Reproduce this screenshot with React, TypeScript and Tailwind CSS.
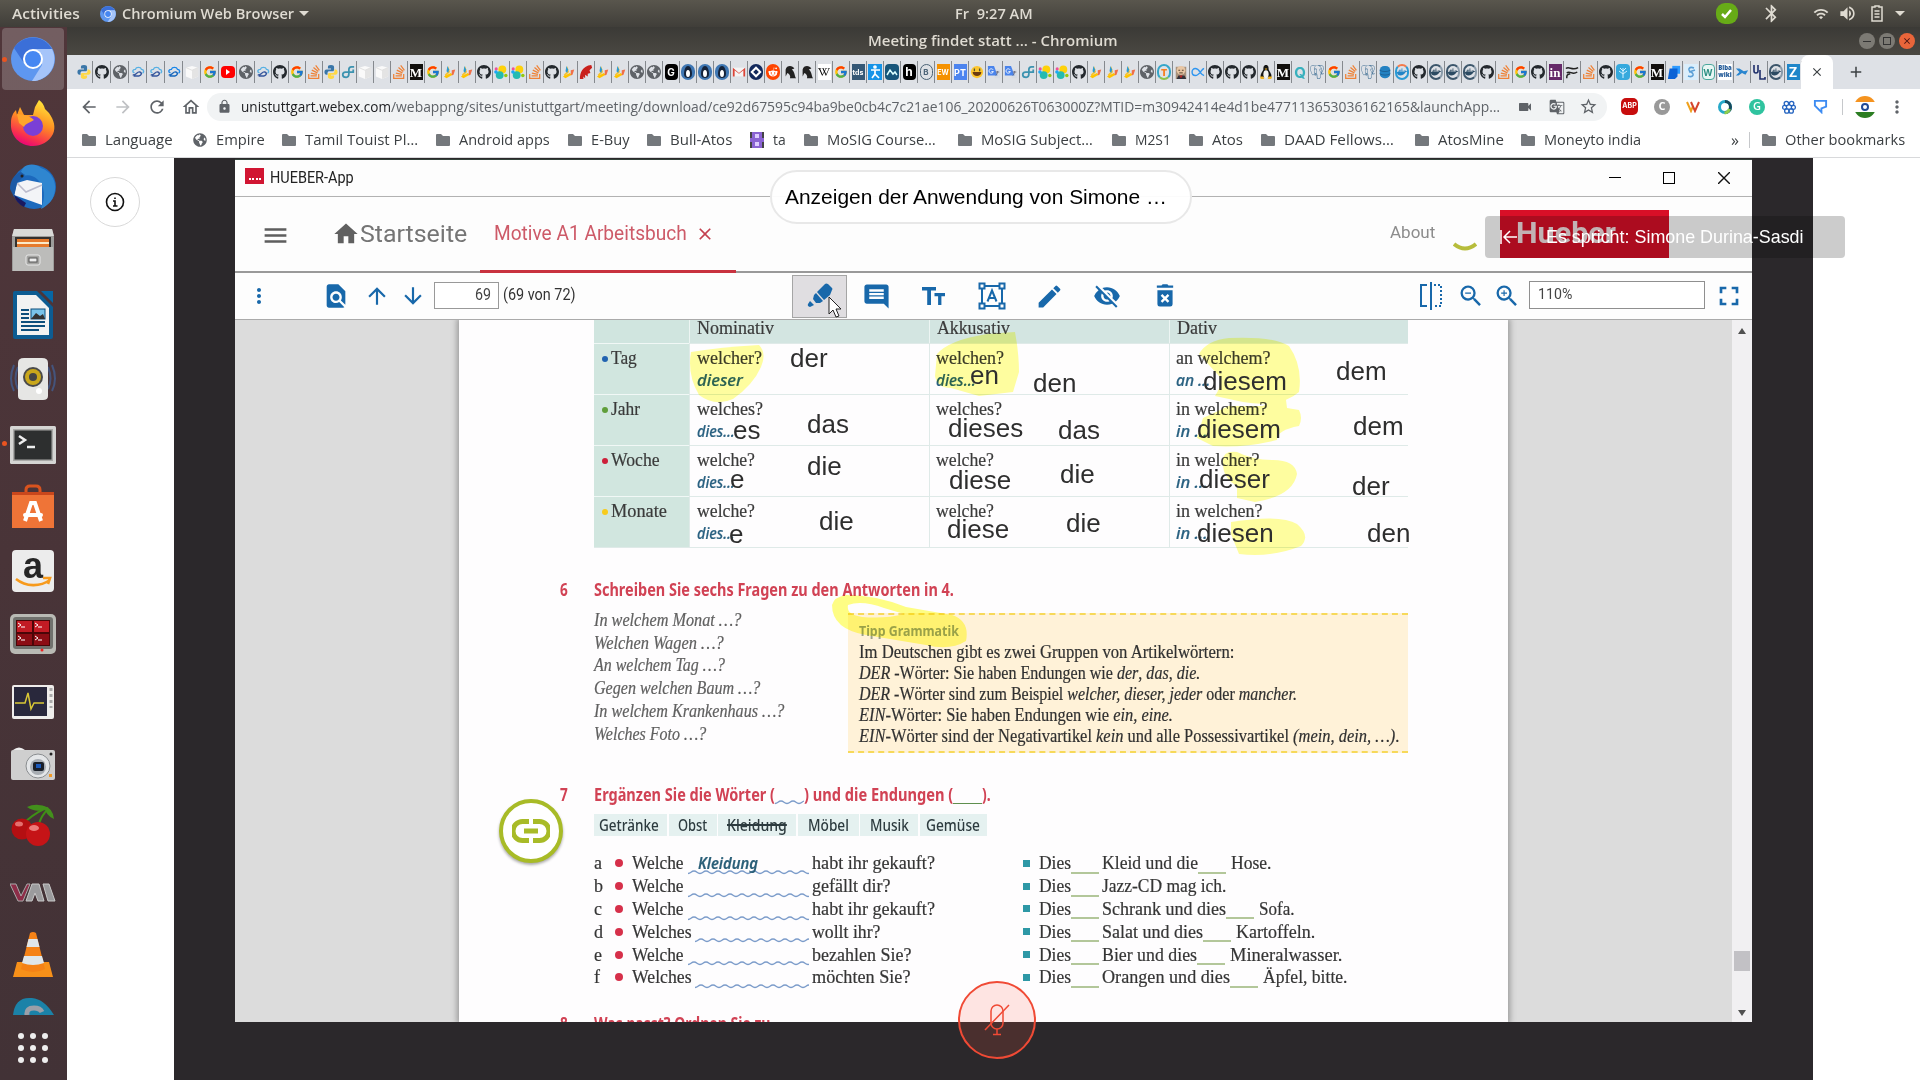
import React, { useLayoutEffect, useRef, useState } from "react";
import { FaGithub, FaGlobeAmericas, FaStackOverflow, FaWikipediaW, FaDocker, FaCloud, FaRedditAlien } from "react-icons/fa";
import { FcGoogle } from "react-icons/fc";
import { SiPostgresql } from "react-icons/si";
import {
  MdArrowBack, MdArrowForward, MdRefresh, MdOutlineHome, MdLock, MdVideocam, MdStarOutline, MdMoreVert,
  MdFindInPage, MdArrowUpward, MdArrowDownward, MdInsertComment, MdEdit, MdVisibilityOff,
  MdZoomIn, MdZoomOut, MdFullscreen, MdHome, MdGTranslate, MdMenu, MdClose, MdAdd, MdVolumeUp, MdWifi, MdBluetooth,
} from "react-icons/md";

/** Text stretched horizontally so that it is exactly `w` pixels wide; `box` is the room it occupies. */
function Fit({ w, box, className = "", children }: { w: number; box?: number; className?: string; children: React.ReactNode }) {
  const ref = useRef<HTMLSpanElement>(null);
  const [s, setS] = useState(1);
  useLayoutEffect(() => {
    if (ref.current) setS(w / ref.current.offsetWidth);
  }, [w]);
  return (
    <span className={"block shrink-0 whitespace-nowrap " + className} style={{ width: box ?? w }}>
      <span ref={ref} className="inline-block origin-left whitespace-pre" style={{ transform: `scaleX(${s})` }}>
        {children}
      </span>
    </span>
  );
}

/* ---------- Favicons ---------- */

const Letter = ({ c, className }: { c: string; className: string }) => (
  <span className={"flex h-4 w-[13px] items-center justify-center font-bold leading-none " + className}>{c}</span>
);

function Favicon({ k }: { k: string }) {
  switch (k) {
    case "py":
      return (
        <svg viewBox="0 0 16 16" className="h-4 w-3.5">
          <path d="M8 0c-3 0-3.500 1-3.500 2.500V4H8v1H3C1 5 .5 6.500.5 8S1 11 3 11h1V9c0-1.500 1-2 2-2h4c1 0 1.500-.7 1.500-2V2.500C11.500 1 10.500 0 8 0z" fill="#3a76a8" />
          <path d="M8 16c3 0 3.500-1 3.500-2.500V12H8v-1h5c2 0 2.500-1.500 2.500-3S15 5 13 5h-1v2c0 1.500-1 2-2 2H6c-1 0-1.500.7-1.500 2v2.500C4.500 15 5.500 16 8 16z" fill="#ffd845" />
        </svg>
      );
    case "gh": return <FaGithub className="h-4 w-3.5 text-[#24292e]" />;
    case "gl": return <FaGlobeAmericas className="h-4 w-3.5 text-[#5f6368]" />;
    case "cl":
    case "cm":
      return (
        <svg viewBox="0 0 16 16" className="h-4 w-3.5" fill="none" strokeWidth="1.6">
          <path d="M4 9C1 8 1.500 5 5 5c1-3 6-3 7 0 3 0 3 4 1 4" stroke={k === "cl" ? "#58b0e3" : "#1a86e8"} />
          <path d="M2 11c3 2 5-4 8-3s2 4-1 4.500H3" stroke={k === "cl" ? "#35559c" : "#1667bd"} />
        </svg>
      );
    case "bx":
      return (
        <svg viewBox="0 0 16 16" className="h-4 w-3.5">
          <path d="M1 3l7-2 7 2v10l-7 3-7-3z" fill="#fafafa" /><path d="M8 6l7-3v10l-7 3z" fill="#e4e4e4" /><path d="M1 3l7 3 7-3" fill="none" stroke="#ddd" />
        </svg>
      );
    case "go": return <FcGoogle className="h-4 w-3.5" />;
    case "yt": return <span className="flex h-3 w-3.5 items-center justify-center rounded-sm bg-[#f00]"><span className="border-y-[3px] border-l-[4px] border-y-transparent border-l-white" /></span>;
    case "so": return <FaStackOverflow className="h-4 w-3 text-[#ef8236]" />;
    case "fn":
      return <svg viewBox="0 0 16 16" className="h-4 w-3.5" fill="none" stroke="#3c93b0" strokeWidth="2"><path d="M15 2h-3c-2 0-3 1-3 3v5c0 3-1 4-3 4s-4-1-4-3 1-3 3-3h9v-3" /></svg>;
    case "md": return <Letter c="M" className="bg-[#12100e] font-['Liberation_Serif'] text-[13px] text-white" />;
    case "hub":
      return (
        <svg viewBox="0 0 16 16" className="h-4 w-3.5">
          <path d="M6 1l2 7-5 5-1-2 3-3z" fill="#f9c22e" /><path d="M5 1l2 4-1 4-2-2z" fill="#2d9bd0" /><path d="M1 13l8-4 2 2-7 4z" fill="#ffc400" /><path d="M10 6l4-1-2 6-2 1z" fill="#f0704a" />
        </svg>
      );
    case "el":
      return (
        <svg viewBox="0 0 16 16" className="h-4 w-3.5">
          <circle cx="9.500" cy="5" r="4.500" fill="#fed10a" /><circle cx="6.500" cy="11.500" r="4.500" fill="#24bbb1" /><circle cx="2.500" cy="4.500" r="1.800" fill="#ef5098" /><circle cx="2.200" cy="8" r="2" fill="#1ba9f5" /><circle cx="13.500" cy="12" r="2" fill="#93c90e" />
        </svg>
      );
    case "rd": return <svg viewBox="0 0 16 16" className="h-4 w-3.5"><path d="M1 16c0-7 3-15 13-16l1 3-3 3 1 3-3 1 0 3-3-2v4l-2-2v3z" fill="#c9201c" /></svg>;
    case "gb": return <Letter c="G" className="rounded-sm bg-black font-['Inter'] text-[10px] text-white" />;
    case "pe": return <span className="flex h-4 w-3.5 items-center justify-center rounded-full bg-[#3f77b3]"><svg viewBox="0 0 10 12" className="h-3 w-2.5"><path d="M5 0c3 0 4 5 4 8s-2 4-4 4-4-1-4-4 1-8 4-8z" fill="#15233a" /><ellipse cx="5" cy="7.500" rx="2" ry="3.500" fill="#fff" /></svg></span>;
    case "gm": return <svg viewBox="0 0 16 16" className="h-4 w-3.5"><path d="M1 3h14v10H1z" fill="#f4f4f4" /><path d="M1 13V3l7 6 7-6v10h-2V6l-5 4-5-4v7z" fill="#dc4437" /></svg>;
    case "nv": return <span className="flex h-4 w-3.5 items-center justify-center rounded-full bg-[#12295c]"><span className="h-2 w-2 rotate-45 border-2 border-white" /></span>;
    case "re": return <span className="flex h-4 w-3.5 items-center justify-center rounded-full bg-[#ff4500]"><FaRedditAlien className="h-3 w-2.5 text-white" /></span>;
    case "fig": return <svg viewBox="0 0 16 16" className="h-4 w-3.5"><path d="M3 5c1-5 8-5 10-1l-3 1c4 3 3 8 5 10H8c1-3-1-5-3-6l-2 4z" fill="#222" /></svg>;
    case "wi": return <span className="flex h-4 w-[13px] items-center justify-center bg-white"><FaWikipediaW className="h-3 w-3 text-black" /></span>;
    case "tds": return <Letter c="tds" className="bg-[#355876] font-['Inter'] text-[7px] text-white" />;
    case "wk": return <span className="flex h-4 w-3.5 items-center justify-center bg-[#1694e8]"><svg viewBox="0 0 12 14" className="h-3.5 w-3" fill="none" stroke="#fff" strokeWidth="1.700"><circle cx="6" cy="2" r="1" /><path d="M2 5h9M6 5v4l-3 4M6 9l4 4" /></svg></span>;
    case "tw": return <span className="flex h-4 w-3.5 items-center justify-center rounded bg-[#17557a]"><svg viewBox="0 0 12 8" className="h-2 w-3" fill="none" stroke="#dff" strokeWidth="1.500"><path d="M1 7l3-5 3 4 2-2 2 3" /></svg></span>;
    case "hh": return <Letter c="h" className="rounded bg-black font-['Inter'] text-[12px] text-white" />;
    case "bb": return <Letter c="B" className="rounded-full border border-[#4b6377] font-['Inter'] text-[8px] text-[#4b6377]" />;
    case "ew": return <Letter c="EW" className="bg-[#f59100] font-['Inter'] text-[7px] text-white" />;
    case "pt": return <Letter c="PT" className="bg-[#4c84ef] font-['Inter'] text-[9px] text-white" />;
    case "em": return <svg viewBox="0 0 16 16" className="h-4 w-3.5"><circle cx="8" cy="8" r="7" fill="#fcc62f" /><path d="M3 8h10c0 6-10 6-10 0z" fill="#6b3b10" /><path d="M5 4v3M11 4v3" stroke="#553" strokeWidth="1.500" /></svg>;
    case "tr": return <svg viewBox="0 0 16 16" className="h-4 w-3.5"><path d="M7 5h8v10H9z" fill="#d7dce3" /><path d="M1 1h7l4 11H1z" fill="#4a84ec" /><path d="M7 5.500a2.500 2.500 0 1 0 .3 2H5" stroke="#fff" fill="none" /><path d="M10 8h4M12 7c0 3-1 4-2 5" stroke="#667" fill="none" /></svg>;
    case "tt": return <span className="flex h-4 w-3.5 items-center justify-center rounded-full border-2 border-[#35a6c9] border-b-[#8bc34a] font-['Inter'] text-[9px] font-black leading-none text-[#f57f20]">T</span>;
    case "fc": return <svg viewBox="0 0 16 16" className="h-4 w-3.5"><path d="M2 2h12v14H2z" fill="#a8927c" /><circle cx="8" cy="6" r="5" fill="#e8c6a4" /><path d="M3 16l2-4h7l2 4z" fill="#33333b" /><path d="M6 12h4l-2 3z" fill="#b22" /><path d="M5 6h2M9 6h2M6 9h4" stroke="#432" /></svg>;
    case "al": return <svg viewBox="0 0 16 16" className="h-4 w-3.5" fill="none" stroke="#2f96f0" strokeWidth="1.600"><path d="M15 4c-3 0-5 8-10 8-5 0-5-8 0-8s6 8 10 8" /></svg>;
    case "lx": return <svg viewBox="0 0 16 16" className="h-4 w-3.5"><path d="M8 0c3 0 3 3 3 5 1 3 4 5 3 9H2C1 10 4 8 5 5c0-2 0-5 3-5z" fill="#161616" /><ellipse cx="8" cy="10.500" rx="3" ry="4.500" fill="#f4f4f4" /><path d="M1 13l4 0 1 3H2zM15 13l-4 0-1 3h4zM6.500 4h3L8 6z" fill="#f1b424" /></svg>;
    case "qq": return <Letter c="Q" className="font-['Inter'] text-[15px] text-[#38b0bd]" />;
    case "pg": return <span className="flex h-4 w-3.5 items-center justify-center"><SiPostgresql className="h-4 w-3.5 text-[#35678e]" /></span>;
    case "db": return <svg viewBox="0 0 16 16" className="h-4 w-3.5"><rect x="2" y="1" width="12" height="14" rx="5" fill="#2482c2" /><path d="M2 6c3 2 9 2 12 0M2 10c3 2 9 2 12 0" stroke="#1b5f92" fill="none" /></svg>;
    case "dc": return <span className="flex h-4 w-3.5 items-center justify-center rounded-full border-2 border-[#2a9ad5] border-t-[#f47a4a]"><FaDocker className="h-2.5 w-2.5 text-[#2284c6]" /></span>;
    case "dk": return <span className="flex h-4 w-3.5 items-center justify-center rounded-full border-2 border-[#3c566b] border-r-[#8b9cab]"><FaDocker className="h-2.5 w-2.5 text-[#2b4a62]" /></span>;
    case "in": return <Letter c="in" className="bg-[#662a6a] font-['Liberation_Serif'] text-[13px] text-white" />;
    case "sq": return <svg viewBox="0 0 16 16" className="h-4 w-3.5" fill="none" stroke="#222" strokeWidth="1.700"><path d="M1 4c4-3 7 3 14-1M2 9c4-3 6 3 12-1M2 15c0-3 0-4 4-5" /></svg>;
    case "tre": return <span className="flex h-4 w-3.5 items-center justify-center rounded-sm bg-[#36a9dd]"><svg viewBox="0 0 12 12" className="h-3 w-3" fill="none" stroke="#d5f1ff"><path d="M6 12V2M6 8L2 5M6 8l4-3M6 5L3 2M6 5l3-3" /></svg></span>;
    case "st": return <svg viewBox="0 0 16 16" className="h-4 w-3.5"><path d="M6 1h9v9H6z" fill="#2f9bff" /><path d="M3 4h9v9l-3 3H1z" fill="#0b62d6" /></svg>;
    case "lb": return <svg viewBox="0 0 14 16" className="h-4 w-3.5"><path d="M0 0h14v16H0z" fill="#dbeefb" /><path d="M10 4c-5-2-7 2-3 4s2 6-3 4M5 8l6-2" fill="none" stroke="#5b9fd6" strokeWidth="1.500" /></svg>;
    case "wt": return <Letter c="W" className="rounded border border-[#4ba89d] bg-[#e8f6f4] font-['Inter'] text-[9px] text-[#2e8f83]" />;
    case "tx": return <span className="flex h-4 w-3.5 flex-col items-center justify-center bg-white text-[6px] font-black leading-[7px] text-[#1e5796]"><span>Blba</span><span>wiki</span></span>;
    case "kk": return <svg viewBox="0 0 16 16" className="h-4 w-3.5"><path d="M1 4l4 4-4 4h3l4-3 4 2 3-5-5 1-5-3z" fill="#2a86cf" /></svg>;
    case "ul": return <svg viewBox="0 0 14 16" className="h-4 w-3.5" fill="none" stroke="#1e2f6b" strokeWidth="1.600"><path d="M2 1v6q0 2 2 2t2-2V1M8 6v9h5v-2" /></svg>;
    case "zz": return <Letter c="Z" className="bg-[#1f86c9] font-['Inter'] text-[13px] text-white" />;
    default: return <FaCloud className="h-4 w-3.5 text-sky-500" />;
  }
}

const TABS = (
  "py gh gl cl cl cm bx go yt gl cl gh go so py fn bx bx so md go hub hub gh el el so gh hub rd hub hub gl " +
  "gl gb pe pe pe gm nv re fig fig wi go tds wk tw hh bb ew pt em tr tr fn el el gh hub hub hub gl tt fc al gh gh gh lx " +
  "md qq pg go so pg db dc gh dk dk dk gh so go gh in sq so gh tre go md st lb wt tx kk ul dk zz"
).split(" ");

/* ---------- Dock ---------- */

const Chromium = ({ className }: { className: string }) => (
  <svg viewBox="0 0 44 44" className={className}>
    <circle cx="22" cy="22" r="22" fill="#5e97f0" />
    <path d="M3 11a22 22 0 0 1 38 1H22l-9 14z" fill="#3b6fd8" />
    <path d="M41 12a22 22 0 0 1-20 32l10-16 0-11-9-5z" fill="#a5c4f9" />
    <circle cx="22" cy="22" r="10" fill="#fff" />
    <circle cx="22" cy="22" r="8" fill="#4687f2" />
  </svg>
);

const DOCK: React.ReactNode[] = [
  <Chromium className="size-11" />,
  <svg viewBox="0 0 46 46" className="size-[46px]">
    <defs>
      <linearGradient id="ff" x1="0.7" y1="0" x2="0.3" y2="1"><stop offset="0" stopColor="#ffe83a" /><stop offset="0.45" stopColor="#ff9022" /><stop offset="0.8" stopColor="#f8304e" /><stop offset="1" stopColor="#e6007c" /></linearGradient>
    </defs>
    <path d="M29 0c3 2 5 5 6 9l4 4c5 7 7 14 4 21-4 8-12 12-20 12C10 46 0 36 1 23c0-6 2-10 5-13l1 5 3-8 4 8 9 0 2-8z" fill="url(#ff)" />
    <circle cx="23" cy="26" r="10" fill="#7a3fd6" /><path d="M7 14c7 1 10 0 17 6-5 3-9 4-10 7l-5-4z" fill="#ffa52c" />
  </svg>,
  <svg viewBox="0 0 48 48" className="size-12">
    <circle cx="25" cy="24" r="22" fill="#1c69bd" /><path d="M14 5c5-5 14-4 18 0 12 4 15 15 14 22-1 9-6 15-14 19 5-12 4-23-4-30-6-5-12-5-20 0z" fill="#2f86d0" />
    <path d="M8 20l10-3 15 3 0 22-28-10z" fill="#f3f4f7" /><path d="M8 20l9 9 16-7" fill="none" stroke="#bbc" strokeWidth="1.500" /><path d="M1 26c0-8 4-15 11-17l4 3-8 8-3 14z" fill="#1d5aa6" /><circle cx="13" cy="13" r="1.500" fill="#222" /><path d="M5 32l12 8-2 4q-8-4-10-12z" fill="#191960" />
  </svg>,
  <svg viewBox="0 0 44 44" className="size-11">
    <path d="M3 0h38l2 8v34H1V8z" fill="#9d9d9b" /><path d="M3 0h38l2 7H1z" fill="#d9d9d7" /><path d="M4 8h36v12H4z" fill="#33302e" /><path d="M6 10h32v8H6z" fill="#e67a2c" /><path d="M6 13h32v2H6z" fill="#fbe9c8" />
    <path d="M2 18h40v24H2z" fill="#bcbcba" /><rect x="15" y="26" width="14" height="10" rx="2" fill="#a5a5a3" stroke="#e8e8e8" /><rect x="18" y="29" width="8" height="4" fill="#eee" stroke="#555" />
  </svg>,
  <svg viewBox="0 0 40 48" className="h-12 w-10">
    <path d="M0 2q0-2 2-2h22l16 16v30q0 2-2 2H2q-2 0-2-2z" fill="#0d5c92" /><path d="M28 0h12v12z" fill="#0767a5" /><path d="M4 4h19l13 13v27H4z" fill="#f2f2f2" />
    <path d="M8 19h8M8 23h8M8 27h8M8 31h24M8 35h24M8 39h18" stroke="#0d4e7c" strokeWidth="2" /><rect x="18" y="18" width="14" height="10" fill="#79c3ea" stroke="#0d4e7c" /><path d="M18 28l5-6 4 3 3-2 2 5z" fill="#333" />
  </svg>,
  <svg viewBox="0 0 48 48" className="size-12">
    <path d="M5 10q-6 14 0 26M9 12q-5 12 0 22M43 10q6 14 0 26M39 12q5 12 0 22" fill="none" stroke="#44547c" strokeWidth="2" />
    <path d="M9 8q0-5 6-5h18q6 0 6 5v33q0 4-5 4H14q-5 0-5-4z" fill="#e6e6e4" /><circle cx="24" cy="22" r="10" fill="#4a4a4a" /><circle cx="24" cy="22" r="8" fill="#c9a71b" /><circle cx="24" cy="22" r="4" fill="#454545" /><circle cx="30" cy="36" r="3" fill="#fff" />
  </svg>,
  <svg viewBox="0 0 46 38" className="mt-1 h-[38px] w-[46px]">
    <rect width="46" height="38" rx="1.500" fill="#d5d5d3" /><rect x="3" y="3" width="40" height="32" fill="#a9a9a7" /><rect x="4.500" y="4.500" width="37" height="29" fill="#2d2f2f" /><path d="M9 10l6 4-6 4" fill="none" stroke="#eee" strokeWidth="2.500" /><path d="M17 21h8" stroke="#eee" strokeWidth="2.500" />
  </svg>,
  <svg viewBox="0 0 44 46" className="h-[46px] w-11">
    <path d="M15 14V6q0-4 4-4h6q4 0 4 4v8" fill="none" stroke="#d9531e" strokeWidth="3" /><path d="M1 8h42v8H1z" fill="#c9471c" /><path d="M1 11h42v33H1z" fill="#ef7437" />
    <path d="M14 37l6-18h4l6 18" fill="none" stroke="#fff" strokeWidth="4" /><rect x="12" y="29" width="20" height="4" rx="2" fill="#fff" />
  </svg>,
  <span className="relative flex h-[42px] w-[42px] justify-center rounded-sm bg-[#ececec] font-['Liberation_Sans'] text-[36px] font-bold leading-[32px] text-[#252525]">
    a
    <svg viewBox="0 0 42 12" className="absolute bottom-1 left-0 h-3 w-[42px]" fill="none" stroke="#f79a1c" strokeWidth="2.600"><path d="M4 3c10 8 24 8 34 1M31 2l7 0-2 6" /></svg>
  </span>,
  <svg viewBox="0 0 46 40" className="-mt-0.5 h-10 w-[46px]">
    <rect width="46" height="40" rx="5" fill="#b9bab4" /><rect x="3" y="3" width="40" height="32" rx="3" fill="#70716d" /><rect x="6" y="6" width="34" height="26" fill="#4a0608" />
    <path d="M7 7h15v11H7zM24 7h15v11H24z" fill="#c21b24" /><path d="M7 20h15v11H7zM24 20h15v11H24z" fill="#8c0d14" /><path d="M8 9l3 2-3 2M11 13h4M25 9l3 2-3 2M28 13h4M8 22l3 2-3 2M11 26h4M25 22l3 2-3 2M28 26h4" fill="none" stroke="#fff" /><circle cx="32" cy="36" r="1.500" fill="#e22" />
  </svg>,
  <svg viewBox="0 0 42 34" className="mt-1.5 h-[34px] w-[42px]">
    <rect width="42" height="34" rx="2" fill="#efedeb" /><rect x="2" y="2" width="33" height="29" fill="#29283c" /><path d="M3 18h10l3-10 3 16 3-6h10" fill="none" stroke="#d9c736" strokeWidth="1.500" /><path d="M39 3v20" stroke="#aaa" strokeWidth="3" strokeDasharray="3 3" />
  </svg>,
  <svg viewBox="0 0 44 34" className="mt-0.5 h-[34px] w-11">
    <rect y="3" width="44" height="30" rx="2" fill="#cfcfcf" /><path d="M2 3q6-5 12 0z" fill="#eee" /><circle cx="27" cy="19" r="12" fill="#e4e6e8" stroke="#8a8d90" /><circle cx="27" cy="20" r="8" fill="#a8adb3" /><rect x="22" y="15" width="11" height="9" rx="2" fill="#1a1f29" /><rect x="25" y="17" width="5" height="4" fill="#1b58b8" /><rect x="38" y="27" width="3" height="3" fill="#f39a26" /><circle cx="40" cy="7" r="1.500" fill="#222" />
  </svg>,
  <svg viewBox="0 0 44 42" className="-mt-1 h-[42px] w-11">
    <path d="M15 17Q28 6 37 4M28 20q2-8 9-15" fill="none" stroke="#3f8f16" strokeWidth="2" /><path d="M16 3q10-5 22 1-12 6-22-1zM33 2q9 2 10 13-8-3-10-13z" fill="#43901c" /><circle cx="11" cy="25" r="10.500" fill="#b40f12" /><circle cx="27" cy="30" r="12" fill="#c51417" /><ellipse cx="23" cy="24" rx="5" ry="3" fill="#ec7c7a" /><ellipse cx="8" cy="20" rx="4" ry="2.500" fill="#e46f6e" />
  </svg>,
  <svg viewBox="0 0 46 20" className="mt-1 h-5 w-[46px]">
    <path d="M0 1h6l5 12 6-12h3l-7 17H8z" fill="#8d2d48" stroke="#aaa" /><path d="M22 1h7l5 17h-6l-3-8-3 8h-6zM33 1h6l6 17h-7z" fill="#9b9b9d" stroke="#c8c8c8" />
  </svg>,
  <svg viewBox="0 0 42 46" className="h-[46px] w-[42px]">
    <path d="M5 30h32l4 15H1z" fill="#f79019" /><path d="M18 1q3-2 6 0l9 36q-12 6-24 0z" fill="#f58216" /><path d="M16.500 7h9l2 8h-13zM12 24h18l2 7q-11 4-22 0z" fill="#dfe6ea" />
  </svg>,
];

/* ---------- Browser ---------- */

const BOOKMARKS: [string, string, number, number][] = [
  ["f", "Language", 68, 88], ["g", "Empire", 49, 66], ["f", "Tamil Touist Pl…", 113, 131], ["f", "Android apps", 91, 109], ["f", "E-Buy", 39, 56],
  ["f", "Bull-Atos", 62, 80], ["t", "ta", 13, 31], ["f", "MoSIG Course…", 109, 131], ["f", "MoSIG Subject…", 112, 131], ["f", "M2S1", 36, 54],
  ["f", "Atos", 31, 49], ["f", "DAAD Fellows…", 110, 131], ["f", "AtosMine", 66, 83], ["f", "Moneyto india", 97, 187],
];

const Folder = () => (
  <svg viewBox="0 0 14 12" className="h-3 w-3.5 shrink-0"><path d="M0 1q0-1 1-1h4l2 2h6q1 0 1 1v8q0 1-1 1H1q-1 0-1-1z" fill="#74787c" /></svg>
);

function BrowserChrome() {
  return (
    <div className="font-['Open_Sans',sans-serif]">
      <div className="flex h-7 items-center bg-gradient-to-b from-[#3b3a36] to-[#4a4842] pl-[801px] text-[15px] font-semibold text-[#dfdbd2]">
        <Fit w={250} className="-mt-px">Meeting findet statt ... - Chromium</Fit>
        <div className="ml-auto flex items-center gap-1 pr-[5px]">
          <span className="flex size-4 items-center justify-center rounded-full bg-[#7c7a74]"><span className="h-px w-2 bg-[#333]" /></span>
          <span className="flex size-4 items-center justify-center rounded-full bg-[#7c7a74]"><span className="size-2 border border-[#333]" /></span>
          <span className="flex size-4 items-center justify-center rounded-full bg-[#e9653a]"><MdClose className="size-2.5 text-[#411]" /></span>
        </div>
      </div>
      <div className="flex h-[34px] bg-[#dee1e6] pl-[8px]">
        {TABS.map((k, i) => (
          <span key={i} className={"flex shrink-0 items-center justify-center border-r border-[#85898e] [border-image:linear-gradient(to_bottom,transparent_20%,#85898e_20%,#85898e_80%,transparent_80%)_1] " + (i < 10 ? "w-[18px]" : "w-[17px]")}>
            <Favicon k={k} />
          </span>
        ))}
        <span className="-ml-px flex w-[32px] shrink-0 items-center justify-center rounded-t-lg bg-white"><MdClose className="size-3.5 text-[#3c4043]" /></span>
        <span className="flex w-[46px] items-center justify-center"><MdAdd className="size-[18px] text-[#3c4043]" /></span>
      </div>
      <div className="flex h-[35px] items-center bg-white text-[#5f6368]">
        <span className="ml-1.5 flex w-[134px] shrink-0 justify-between px-1.5">
          <MdArrowBack className="size-5" /><MdArrowForward className="size-5 text-[#bfc1c4]" /><MdRefresh className="size-5" /><MdOutlineHome className="size-5" />
        </span>
        <div className="flex h-7 w-[1400px] shrink-0 items-center rounded-full bg-[#f1f3f4] pl-2.5 text-[15px]">
          <MdLock className="mr-[9px] size-[15px]" />
          <Fit w={150} className="text-[#202124]">unistuttgart.webex.com</Fit>
          <Fit w={1109}>/webappng/sites/unistuttgart/meeting/download/ce92d67595c94ba9be0cb4c7c21ae106_20200626T063000Z?MTID=m30942414e4d1be477113653036162165&launchApp…</Fit>
          <MdVideocam className="ml-[17px] size-4" /><MdGTranslate className="ml-4 size-4" /><MdStarOutline className="ml-3.5 size-[19px]" />
        </div>
        <span className="ml-[14px] flex size-[17px] items-center justify-center rounded-[5px] bg-[#c70d0d] font-['Inter'] text-[7px] font-bold text-white">ABP</span>
        <span className="ml-[16px] flex size-4 items-center justify-center rounded-full bg-[#999] text-[11px] font-bold text-white">C</span>
        <svg viewBox="0 0 14 12" className="ml-[16px] h-3 w-3.5" fill="none" strokeWidth="2"><path d="M1 1l4 9 2-5" stroke="#f0a11c" /><path d="M5 1l4 9 4-9" stroke="#d5452c" /></svg>
        <svg viewBox="0 0 16 16" className="ml-[17px] size-4"><circle cx="8" cy="8" r="5.500" fill="none" stroke="#26a9c9" strokeWidth="3" /><path d="M8 2.500a5.500 5.500 0 0 1 0 11" fill="none" stroke="#174a5c" strokeWidth="3" /><path d="M12.500 10a6 6 0 0 1-5 4" fill="none" stroke="#8fce4c" strokeWidth="3" /></svg>
        <span className="ml-4 flex size-4 items-center justify-center rounded-full bg-[#2fc39f] text-[11px] font-semibold text-white">G</span>
        <svg viewBox="0 0 16 16" className="ml-[17px] size-3.5" fill="none" stroke="#2665c0" strokeWidth="1.500"><circle cx="5" cy="4" r="2.500" /><circle cx="11" cy="4" r="2.500" /><circle cx="3" cy="8.500" r="2.300" /><circle cx="13" cy="8.500" r="2.300" /><circle cx="5.500" cy="12.500" r="2.500" /><circle cx="10.500" cy="12.500" r="2.500" /></svg>
        <svg viewBox="0 0 16 16" className="ml-[17px] size-[15px]" fill="none" stroke="#3c8bf2" strokeWidth="2"><path d="M2 2h12v6l-5 2v4L2 7z" /></svg>
        <span className="ml-[14px] h-4 w-px bg-[#c6c8cb]" />
        <span className="ml-[11px] flex h-[22px] w-[22px] flex-col items-center overflow-hidden rounded-full bg-white"><span className="h-[7px] w-full bg-[#f5931f]" /><span className="my-px size-2 rounded-full border-2 border-[#224a94]" /><span className="h-[6px] w-full bg-[#2b7d22]" /></span>
        <MdMoreVert className="ml-[11px] size-5" />
      </div>
      <div className="flex h-[34px] items-center bg-white pb-[3px] pl-[15px] text-[15px] text-[#3c4043] shadow-[inset_0_-1px_0_#d8d9db]">
        {BOOKMARKS.map(([k, t, w, box]) => (
          <span key={t} className="flex shrink-0 items-center gap-[9px]">
            {k === "f" ? <Folder /> : k === "g" ? <FaGlobeAmericas className="size-3.5 text-[#5f6368]" /> : (
              <span className="flex h-4 w-3.5 flex-col items-center justify-around border-x-2 border-dashed border-[#444] bg-[#8a63d2]"><i className="size-1 bg-[#dcf]" /><i className="size-1 bg-[#dcf]" /></span>
            )}
            <Fit w={w} box={box}>{t}</Fit>
          </span>
        ))}
        <span className="w-[18px] shrink-0 text-[16px] leading-none">»</span>
        <span className="h-4 w-px shrink-0 bg-[#c6c8cb]" />
        <span className="ml-3 flex shrink-0 items-center gap-[9px]"><Folder /><Fit w={120}>Other bookmarks</Fit></span>
      </div>
    </div>
  );
}

/* ---------- Book page ---------- */

const Serif = "font-['Liberation_Serif',serif]";

const Wave = ({ className = "", n }: { className?: string; n: number }) => (
  <svg viewBox={`0 0 ${n} 5`} className={"h-[5px] shrink-0 " + className} style={{ width: n }} fill="none" stroke="#7c9cca" strokeWidth="1.300">
    <path d={"M0 3.500" + Array.from({ length: Math.ceil(n / 12) }, () => "c3 0 3 -2.500 6 -2.500s3 2.500 6 2.500").join("")} />
  </svg>
);

const ROWS = [
  { dot: "bg-[#2163b0]", n: "Tag", nw: 26, c: [["welcher?", 65, "dieser", 46], ["welchen?", 68, "dies…", 40], ["an welchem?", 94, "an …", 34]] },
  { dot: "bg-[#5f9e3a]", n: "Jahr", nw: 29, c: [["welches?", 66, "dies…", 38], ["welches?", 66, "", 0], ["in welchem?", 91, "in …", 31]] },
  { dot: "bg-[#cd1f3a]", n: "Woche", nw: 49, c: [["welche?", 58, "dies…", 38], ["welche?", 58, "", 0], ["in welcher?", 83, "in …", 31]] },
  { dot: "bg-[#f7cb1c]", n: "Monate", nw: 56, c: [["welche?", 58, "dies…", 38], ["welche?", 58, "", 0], ["in welchen?", 86, "in …", 31]] },
] as { dot: string; n: string; nw: number; c: [string, number, string, number][] }[];

/* Notes typed over the page: text, x, baseline y (both relative to the page) */
const NOTES: [string, number, number][] = [
  ["der", 330, 47], ["en", 510, 64], ["den", 573, 72], ["dem", 876, 60], ["diesem", 743, 70],
  ["es", 273, 119], ["das", 347, 113], ["dieses", 488, 117], ["das", 598, 119], ["diesem", 737, 118], ["dem", 893, 115],
  ["e", 270, 168], ["die", 347, 155], ["diese", 489, 169], ["die", 600, 163], ["dieser", 739, 168], ["der", 892, 175],
  ["e", 269, 223], ["die", 359, 210], ["diese", 487, 218], ["die", 606, 212], ["diesen", 737, 222], ["den", 907, 222],
];

const QS: [string, number][] = [
  ["In welchem Monat …?", 147], ["Welchen Wagen …?", 130], ["An welchem Tag …?", 131],
  ["Gegen welchen Baum …?", 166], ["In welchem Krankenhaus …?", 190], ["Welches Foto …?", 112],
];

const CHIPS: [string, number, number][] = [["Getränke", 60, 73], ["Obst", 29, 48], ["Kleidung", 60, 78], ["Möbel", 41, 61], ["Musik", 39, 58], ["Gemüse", 54, 67]];

const EX: { l: string; w: string; q: string; qw: number; m: string; mw: number; e?: string; ew?: number }[] = [
  { l: "a", w: "Welche", q: "habt ihr gekauft?", qw: 123, m: "Kleid und die", mw: 96, e: "Hose.", ew: 41 },
  { l: "b", w: "Welche", q: "gefällt dir?", qw: 78, m: "Jazz-CD mag ich.", mw: 124 },
  { l: "c", w: "Welche", q: "habt ihr gekauft?", qw: 123, m: "Schrank und dies", mw: 124, e: "Sofa.", ew: 36 },
  { l: "d", w: "Welches", q: "wollt ihr?", qw: 69, m: "Salat und dies", mw: 101, e: "Kartoffeln.", ew: 79 },
  { l: "e", w: "Welche", q: "bezahlen Sie?", qw: 99, m: "Bier und dies", mw: 95, e: "Mineralwasser.", ew: 112 },
  { l: "f", w: "Welches", q: "möchten Sie?", qw: 98, m: "Orangen und dies", mw: 128, e: "Äpfel, bitte.", ew: 84 },
];

const Blank = () => <span className="mt-[19px] h-0.5 w-7 shrink-0 bg-[#b3c79a]" />;

function Page() {
  return (
    <div className="relative h-full w-[1049px] shrink-0 overflow-hidden bg-[#fefdfe] font-['Noto_Sans',sans-serif] shadow-[0_0_6px_2px_#999]">
      {/* Article table */}
      <div className={"ml-[135px] grid w-[814px] grid-cols-[95px_240px_240px_239px] grid-rows-[23px_51px_51px_51px_51px] text-[18px] leading-[22px] text-[#3a3a3a] [-webkit-text-stroke:0.2px] " + Serif}>
        <span className="bg-[#d0e5df]" />
        {([["Nominativ", 77], ["Akkusativ", 73], ["Dativ", 40]] as [string, number][]).map(([t, w]) => (
          <span key={t} className="flex border-l border-white/60 bg-[#d3e5e1] pl-[7px]"><Fit w={w} className="-mt-[3px]">{t}</Fit></span>
        ))}
        {ROWS.map((r) => (
          <React.Fragment key={r.n}>
            <span className="flex border-t border-white/70 bg-[#d1e6df] pl-2 pt-[3px]">
              <i className={"mr-[3px] mt-[9px] size-1.5 rounded-full " + r.dot} /><Fit w={r.nw}>{r.n}</Fit>
            </span>
            {r.c.map(([a, aw, b, bw], i) => (
              <span key={i} className={"flex flex-col border-l border-t border-[#dfeae8] pt-[3px] " + (i === 0 ? "pl-[7px]" : "pl-[6px]")}>
                <Fit w={aw}>{a}</Fit>
                {b && <Fit w={bw} className="font-['Noto_Sans'] text-[16px] font-medium italic text-[#2a6181]">{b}</Fit>}
              </span>
            ))}
          </React.Fragment>
        ))}
      </div>
      <div className="ml-[135px] h-px w-[814px] bg-[#dfeae8]" />

      {/* Exercise 6 */}
      <div className="mt-[30px] flex h-[24px] items-center pl-[101px] text-[17px] font-bold text-[#d14254]">
        <Fit w={8} box={34}>6</Fit><Fit w={360}>Schreiben Sie sechs Fragen zu den Antworten in 4.</Fit>
      </div>
      <div className="flex pl-[135px]">
        <div className={"mt-[7px] w-[254px] text-[18px] italic leading-[22.7px] text-[#606060] [-webkit-text-stroke:0.2px] " + Serif}>
          {QS.map(([t, w]) => <Fit key={t} w={w}>{t}</Fit>)}
        </div>
        <div className="mt-[11px] h-[140px] w-[560px] border-y-2 border-dashed border-[#f7d95a] bg-[#fff2d8] pl-[11px] pt-[5px] text-[#303030]">
          <Fit w={100} className="text-[15px] font-bold leading-[21px] text-[#9aa18a]">Tipp Grammatik</Fit>
          <div className={"mt-px text-[18px] leading-[21px] [-webkit-text-stroke:0.2px] " + Serif}>
            <Fit w={375}>Im Deutschen gibt es zwei Gruppen von Artikelwörtern:</Fit>
            <Fit w={341}><i>DER</i> -Wörter: Sie haben Endungen wie <i>der</i>, <i>das</i>, <i>die.</i></Fit>
            <Fit w={438}><i>DER</i> -Wörter sind zum Beispiel <i>welcher, dieser, jeder</i> oder <i>mancher.</i></Fit>
            <Fit w={314}><i>EIN</i>-Wörter: Sie haben Endungen wie <i>ein, eine.</i></Fit>
            <Fit w={540}><i>EIN</i>-Wörter sind der Negativartikel <i>kein</i> und alle Possessivartikel <i>(mein, dein, …)</i>.</Fit>
          </div>
        </div>
      </div>

      {/* Exercise 7 */}
      <div className="mt-[30px] flex h-6 items-center pl-[101px] text-[17px] font-bold text-[#d14254]">
        <Fit w={8} box={34}>7</Fit><Fit w={181}>Ergänzen Sie die Wörter (</Fit><Wave n={29} className="mt-[15px]" />
        <Fit w={149}>) und die Endungen (</Fit><span className="mt-4 h-px w-[29px] bg-[#5f8f4e]" /><Fit w={9}>).</Fit>
      </div>
      <div className="mt-[7px] flex gap-[1.500px] pl-[135px] text-[16px] font-medium text-[#2d3b3f]">
        {CHIPS.map(([t, w, b], i) => (
          <span key={t} className={"flex h-[22px] items-center bg-[#e5f1f0] " + (i === 0 ? "pl-[5px]" : "justify-center")} style={{ width: b }}>
            <Fit w={w}>{t === "Kleidung" ? <span className="line-through decoration-2">{t}</span> : t}</Fit>
          </span>
        ))}
      </div>
      <div className={"mt-[16px] pl-[135px] text-[18px] leading-[22px] text-[#353535] [-webkit-text-stroke:0.2px] " + Serif}>
        {EX.map((x) => (
          <div key={x.l} className="flex h-[22.800px] items-center">
            <span className="w-[21px]">{x.l}</span>
            <i className="mr-[9px] size-2 rounded-full bg-[#d6304a]" />
            <Fit w={x.w === "Welche" ? 52 : 60} box={x.w === "Welche" ? 56 : 63}>{x.w}</Fit>
            <span className="relative flex">
              <Wave n={x.w === "Welche" ? 121 : 114} className="mt-[18px]" />
              {x.l === "a" && <Fit w={60} className="absolute left-2.5 top-0 font-['Noto_Sans'] text-[16px] font-semibold italic text-[#2a5f78]">Kleidung</Fit>}
            </span>
            <Fit w={x.qw} box={211} className="ml-[3px]">{x.q}</Fit>
            <i className="mr-[9px] size-[7px] bg-[#2e98a6]" />
            <Fit w={32}>Dies</Fit><Blank /><Fit w={x.mw} className="ml-[3px]">{x.m}</Fit>
            {x.e && <><Blank /><Fit w={x.ew!} className="ml-[5px]">{x.e}</Fit></>}
          </div>
        ))}
      </div>
      <div className="mt-[23px] flex h-6 items-center pl-[101px] text-[17px] font-bold text-[#d14254]">
        <Fit w={8} box={34}>8</Fit><Fit w={180}>Was passt? Ordnen Sie zu.</Fit>
      </div>

      {/* Highlighter strokes */}
      <svg viewBox="0 0 1050 400" className="pointer-events-none absolute left-0 top-0 h-[400px] w-[1050px] mix-blend-multiply">
        <path d="M232 32q30-5 68-7 8 8 2 22-8 18-28 32-18 8-34-4-12-20-8-43z" fill="#ffffa0" />
        <path d="M478 34q12-14 50-20l28-2q4 22 4 40l-6 20-34 4-28-8q-14 0-16-12z" fill="#ffffa0" />
        <path d="M740 34q8-14 30-16 44-2 60 8 14 20 10 46-18 16-56 10l-28-6q8-12 4-20z" fill="#ffffa0" />
        <path d="M744 98l26-12h34l22-14 2 16 12 2q4 8 0 16-22 4-22 14-32 8-64 6l-16-8z" fill="#ffffa0" />
        <path d="M764 144q-2-14 14-12 16 8 36 8 22 0 24 14-4 22-42 28l-18-4 0-12q-14-8-14-22z" fill="#ffffa0" />
        <path d="M772 202q50-8 66 2 14 12 4 22-30 12-62 8l-8-20z" fill="#ffffa0" />
        <path fillRule="evenodd" d="M387 275q30 0 60 12l46 8q18 6 14 26-16 10-40 4l-60-10q-34-6-34-30 2-8 14-10zM389 285q-2 10 14 12 24 2 42-3l-20-6q-22-8-36-3z" fill="#ffff78" fillOpacity="0.9" />
      </svg>
      {NOTES.map(([t, x, y], i) => (
        <span key={i} className="absolute font-['Liberation_Sans',sans-serif] text-[26px] leading-[26px] text-[#2e2e2e]" style={{ left: x + 1, top: y - 22 }}>{t}</span>
      ))}

      {/* Link badge */}
      <span className="absolute left-[40px] top-[479px] flex size-16 items-center justify-center rounded-full border-4 border-[#a8bb27] bg-white shadow-[0_2px_3px_#0005]">
        <svg viewBox="0 0 38 24" className="h-6 w-[38px]" fill="none" stroke="#a8bb27" strokeWidth="5">
          <path d="M17 2.500h-6.500a9.500 9.500 0 0 0 0 19H17M21 2.500h6.500a9.500 9.500 0 0 1 0 19H21M12 12h14" />
        </svg>
      </span>
    </div>
  );
}

/* ---------- Shared window ---------- */

function HueberWindow() {
  return (
    <div className="flex h-[863px] w-[1517px] flex-col overflow-hidden bg-[#fdfdfd] font-['Roboto',sans-serif]">
      <div className="flex h-[38px] shrink-0 items-center border-b border-[#b5b5b5] pl-2.5 shadow-[inset_0_1px_0_#33423a]">
        <span className="-mt-1 mr-1.5 flex h-4 w-[19px] items-end justify-center bg-[#d11532] pb-1"><span className="w-3 border-b-2 border-dotted border-white" /></span>
        <Fit w={84} className="text-[16px] text-[#222]">HUEBER-App</Fit>
        <span className="ml-auto h-[1.500px] w-3 bg-black" />
        <span className="ml-[42px] size-3 border-[1.500px] border-black" />
        <svg viewBox="0 0 12 12" className="ml-[43px] mr-[22px] size-3" stroke="#111" strokeWidth="1.400"><path d="M0 0l12 12M12 0L0 12" /></svg>
      </div>
      <div className="relative z-10 flex h-[76px] shrink-0 items-stretch border-b-2 border-[#999] shadow-sm">
        <div className="flex items-center pl-[26px]">
          <MdMenu className="mt-0.5 size-[29px] text-[#5e5e5e]" />
          <MdHome className="ml-[42px] size-[28px] text-[#606060]" />
          <Fit w={107} className="text-[24px] text-[#757575]">Startseite</Fit>
        </div>
        <div className="-mb-0.5 ml-[13px] flex w-[256px] items-center border-b-[3px] border-[#c8323f] pl-[14px]">
          <Fit w={193} className="-mt-0.5 text-[20px] text-[#cd5a68]">Motive A1 Arbeitsbuch</Fit>
          <MdClose className="ml-2 size-5 text-[#c4404f]" />
        </div>
        <div className="ml-auto flex items-center">
          <Fit w={45} className="-mt-0.5 text-[17px] text-[#8c8c8c]">About</Fit>
          <svg viewBox="0 0 24 10" className="ml-[18px] mt-[26px] h-2.5 w-6" fill="none" stroke="#b7bd3b" strokeWidth="4"><path d="M1 2q11 9 22 0" /></svg>
          <span className="ml-[23px] mr-[83px] flex h-12 w-[169px] items-center bg-[#d80f27] pl-4"><Fit w={100} className="text-[29px] font-bold text-[#f3dfe1]">Hueber</Fit></span>
        </div>
      </div>
      <div className="relative z-10 flex h-[47px] shrink-0 items-center border-b border-[#aaa] bg-[#fdfdfd] text-[#1868aa]">
        <MdMoreVert className="ml-3 size-6 shrink-0" />
        <MdFindInPage className="ml-[51px] size-7 shrink-0" />
        <MdArrowUpward className="ml-[14px] size-[26px] shrink-0" />
        <MdArrowDownward className="ml-2.5 size-[26px] shrink-0" />
        <span className="-mt-0.5 ml-2 flex h-[27px] w-[65px] shrink-0 items-center justify-end border border-[#999] bg-white pr-[7px]"><Fit w={16} className="text-[16px] text-[#444]">69</Fit></span>
        <Fit w={73} className="-mt-0.5 ml-1 text-[16px] text-[#333]">(69 von 72)</Fit>
        <span className="relative ml-[216px] flex h-[43px] w-[55px] shrink-0 items-center justify-center border border-[#a5a5a5] bg-[#e0dee1]">
          <svg viewBox="0 0 26 26" className="size-[26px]" fill="currentColor"><path d="M18 1q1-1 3 0l4 4q1 1 0 2l-2 5-6 5-7-8zM9 10l7 8-3 2-4 0-3-4 1-4zM3 18l4 4-4 2q-3-1-2-3z" /></svg>
          <svg viewBox="0 0 14 22" className="absolute left-[35px] top-5 h-[22px] w-3.5"><path d="M1 1v17l4-4 3 7 3-1-3-7h5z" fill="#fff" stroke="#222" /></svg>
        </span>
        <MdInsertComment className="ml-[15px] size-[29px] shrink-0" />
        <svg viewBox="0 0 23 19" className="ml-[31px] h-[19px] w-[23px] shrink-0" fill="currentColor"><path d="M0 0h14v3.500H9V18H5.200V3.500H0zM12.500 6H23v3.200h-3.600V18h-3.300V9.200h-3.600z" /></svg>
        <svg viewBox="0 0 28 28" className="ml-[33px] size-7 shrink-0" fill="none" stroke="currentColor" strokeWidth="2">
          <path d="M7 4h14M7 24h14M4 7v14M24 7v14M1.500 1.500h5v5h-5zM21.500 1.500h5v5h-5zM1.500 21.500h5v5h-5zM21.500 21.500h5v5h-5z" /><path d="M9.500 19.500L14 8.500l4.500 11M11 16h6" />
        </svg>
        <MdEdit className="ml-[29px] size-[29px] shrink-0" />
        <MdVisibilityOff className="ml-[29px] size-7 shrink-0" />
        <svg viewBox="0 0 24 24" className="ml-[30px] size-7 shrink-0"><path d="M5.500 7h13v12q0 2-2 2h-9q-2 0-2-2zM5 3h4l1-1h4l1 1h4v2H5z" fill="currentColor" /><path d="M9 11l6 6M15 11l-6 6" stroke="#fff" strokeWidth="2" /></svg>
        <svg viewBox="0 0 24 28" className="ml-[240px] h-7 w-6 shrink-0" fill="none" stroke="currentColor" strokeWidth="2"><path d="M8 3H2v21h6M12 0v28" /><path d="M15 3h7v21h-7" strokeDasharray="2 2" /></svg>
        <MdZoomOut className="ml-[14px] size-7 shrink-0" />
        <MdZoomIn className="ml-2 size-7 shrink-0" />
        <span className="-mt-[3px] ml-2 flex h-7 w-[176px] shrink-0 items-center border border-[#8f8f8f] bg-white pl-2"><Fit w={34} className="text-[15px] text-[#444]">110%</Fit></span>
        <MdFullscreen className="ml-2 size-8 shrink-0" />
      </div>
      <div className="flex min-h-0 flex-1 bg-[#dcdcdc] pl-[224px]">
        <Page />
        <div className="ml-auto flex w-[20px] flex-col items-center bg-[#f1f0f2] text-[#505050]">
          <span className="mt-2 border-x-4 border-b-[6px] border-x-transparent border-b-current" />
          <span className="mt-[617px] h-5 w-4 bg-[#c2c1c5]" />
          <span className="mt-[39px] border-x-4 border-t-[6px] border-x-transparent border-t-current" />
        </div>
      </div>
    </div>
  );
}

export default function App() {
  return (
    <div className="flex h-[1080px] w-[1920px] flex-col overflow-hidden bg-white">
      <header className="flex h-[27px] shrink-0 items-center bg-gradient-to-b from-[#59564d] to-[#403e39] pl-3 font-['Open_Sans',sans-serif] text-[15px] font-semibold text-[#dfdbd2]">
        <Fit w={68} box={88}>Activities</Fit>
        <Chromium className="size-4" />
        <Fit w={172} className="ml-1.5">Chromium Web Browser</Fit>
        <span className="ml-[5px] border-x-[5px] border-t-[5px] border-x-transparent border-t-current" />
        <Fit w={78} className="ml-[646px]">{"Fr  9:27 AM"}</Fit>
        <span className="ml-auto flex h-[21px] w-[22px] items-center justify-center rounded-[9px] bg-[#67ab17]">
          <svg viewBox="0 0 12 10" className="h-2.5 w-3" fill="none" stroke="#fff" strokeWidth="2.500"><path d="M1 5l3 3 6-7" /></svg>
        </span>
        <MdBluetooth className="ml-[23px] size-[21px]" />
        <MdWifi className="ml-[31px] size-4" />
        <MdVolumeUp className="ml-[9px] size-[19px]" />
        <svg viewBox="0 0 12 17" className="ml-[14px] h-[17px] w-3" fill="none" stroke="currentColor" strokeWidth="1.500"><path d="M4 2V1h4v1h3v14H1V2zM3.500 6h5M3.500 9h5M3.500 12h5" /></svg>
        <span className="ml-3 mr-[15px] border-x-[5px] border-t-[5px] border-x-transparent border-t-current" />
      </header>
      <div className="flex min-h-0 flex-1">
        <nav className="flex w-[67px] shrink-0 flex-col bg-gradient-to-b from-[#50363a] to-[#423236]">
          {DOCK.map((icon, i) => (
            <span key={i} className="relative flex h-16 w-[66px] shrink-0 items-center justify-center">
              {i === 0 && <span className="absolute inset-x-0.5 inset-y-px rounded bg-white/20" />}
              {(i === 0 || i === 6) && <span className="absolute left-0.5 size-[5px] rounded-full bg-[#e95420]" />}
              <span className="relative">{icon}</span>
            </span>
          ))}
          <svg viewBox="0 0 41 17" className="mx-auto mt-[11px] h-[17px] w-[41px] shrink-0">
            <path d="M0 17Q2 0 16 0q14-1 25 17z" fill="#1b82a8" /><path d="M14 17q-1-7 7-7 6 0 8 4" fill="none" stroke="#9b9fa8" strokeWidth="5" />
          </svg>
          <span className="mx-auto mt-[18px] grid grid-cols-3 gap-1.5 pr-px">
            {Array.from({ length: 9 }, (_, i) => <i key={i} className="size-1.5 rounded-full bg-[#eee]" />)}
          </span>
        </nav>
        <main className="flex min-w-0 flex-1 flex-col">
          <BrowserChrome />
          <div className="relative flex flex-1 bg-white">
            <div className="flex w-[107px] shrink-0 justify-center pt-[19px]">
              <span className="mr-[11px] flex size-[50px] items-center justify-center rounded-full border border-[#d9d9d9]">
                <svg viewBox="0 0 20 20" className="size-5" fill="none" stroke="#111" strokeWidth="1.600"><circle cx="10" cy="10" r="8.500" /><path d="M8 9h2v5M8 14h4.500M10 5.500v1.500" /></svg>
              </span>
            </div>
            <div className="w-[1639px] bg-[#2b282b] pl-[61px] pt-px"><HueberWindow /></div>

            <div className="absolute left-[703px] top-[12px] z-20 flex h-[54px] w-[422px] items-center rounded-full border-2 border-[#e8e8e8] bg-white/95 pl-[13px] font-['Liberation_Sans',sans-serif] text-[21px] text-black">
              <Fit w={382}>Anzeigen der Anwendung von Simone …</Fit>
            </div>
            <div className="absolute left-[1418px] top-[58px] z-20 flex h-[42px] w-[360px] items-center rounded bg-black/20 pl-[15px] font-['Liberation_Sans',sans-serif] text-[19px] text-white">
              <svg viewBox="0 0 18 14" className="mr-[28px] h-3.5 w-[18px]" fill="none" stroke="currentColor" strokeWidth="1.500"><path d="M1 0v14M17 7H4M10 1L4 7l6 6" /></svg>
              <Fit w={258}>Es spricht: Simone Durina-Sasdi</Fit>
            </div>
            <div className="absolute left-[891px] top-[823px] z-20 flex size-[78px] items-center justify-center rounded-full border-2 border-[#f04a35] bg-[#ff5a46]/15">
              <svg viewBox="0 0 26 32" className="h-8 w-[26px]" fill="none" stroke="#f04a35" strokeWidth="1.500"><rect x="7" y="1" width="12" height="24" rx="6" /><path d="M13 25v5M9 30.500h8M1 26L25 1" /></svg>
            </div>
          </div>
        </main>
      </div>
    </div>
  );
}
